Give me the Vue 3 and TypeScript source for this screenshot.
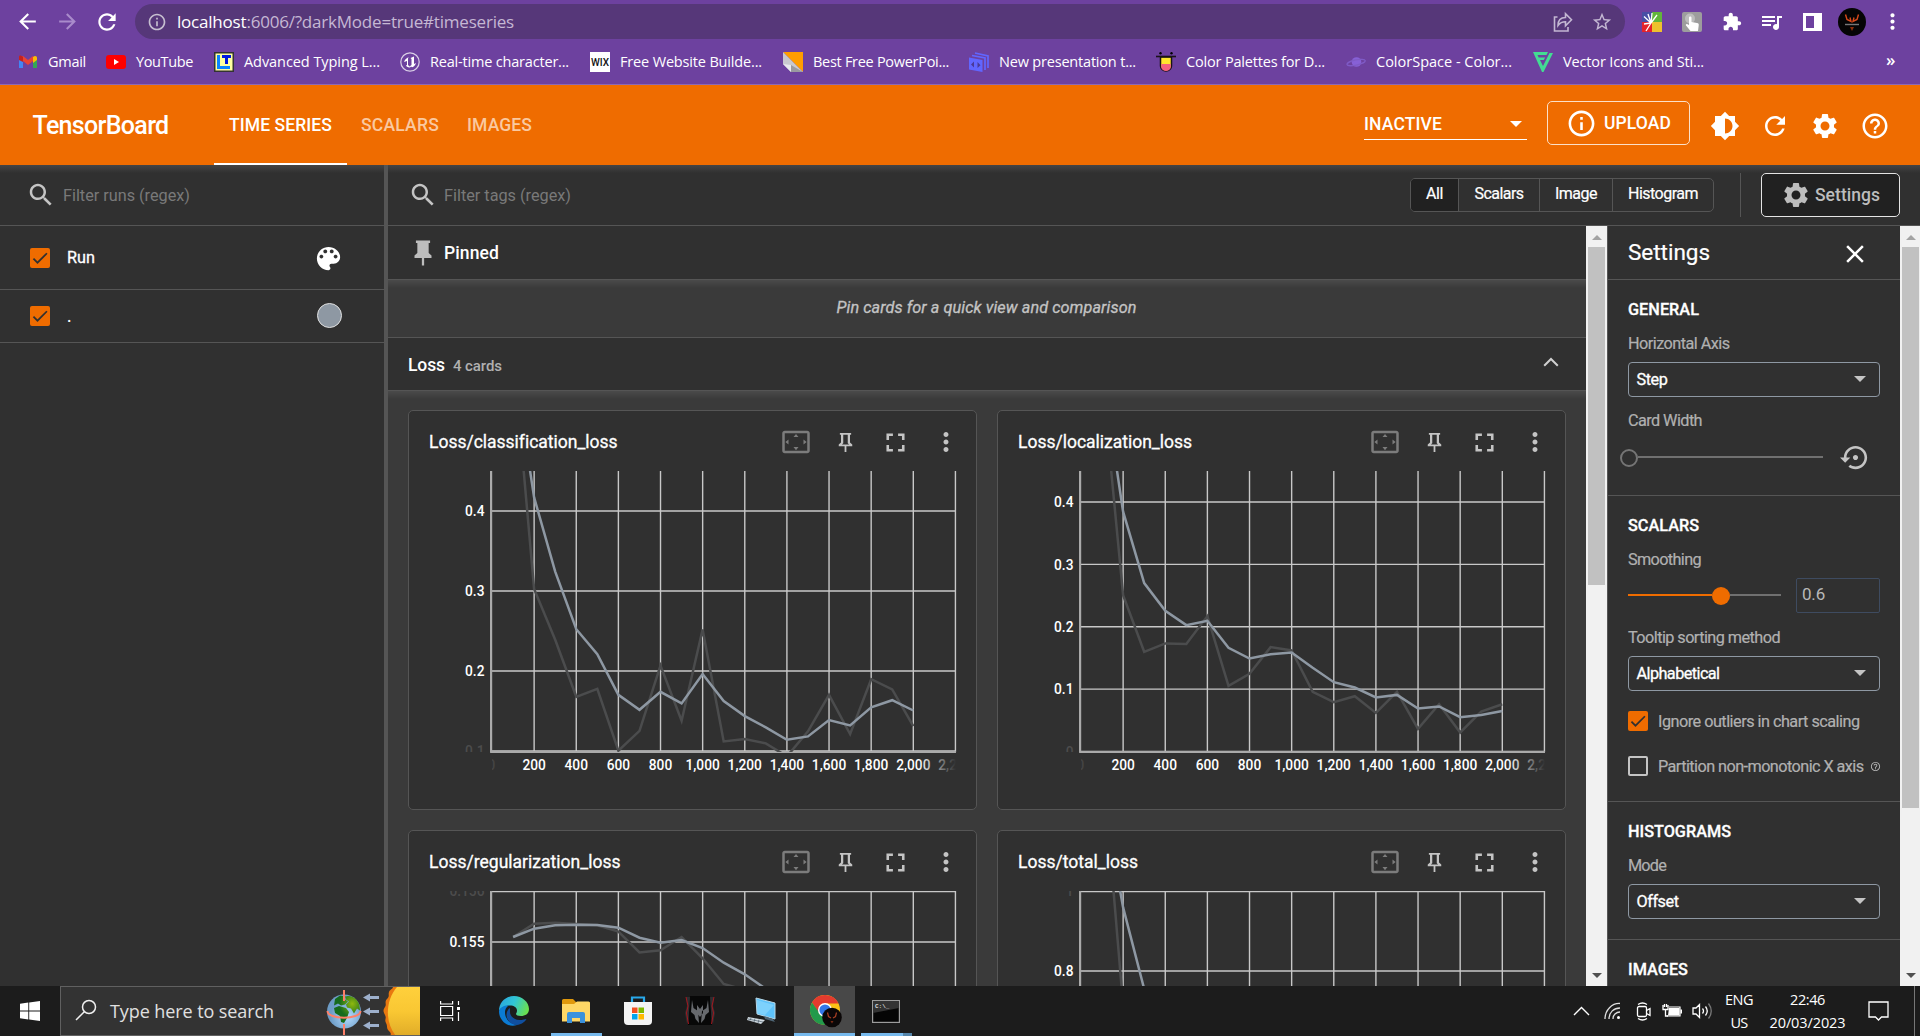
<script setup lang="ts">
import type { Directive } from 'vue'

// Spreads a label over the given width by adjusting its letter spacing.
const vFit: Directive<HTMLElement, number> = {
  mounted(el, { value }) {
    const count = (el.textContent ?? '').trim().length
    if (count < 2) return
    const range = document.createRange()
    range.selectNodeContents(el)
    const natural = range.getBoundingClientRect().width
    el.style.letterSpacing = `${((value - natural) / count).toFixed(3)}px`
  },
}

const icons = {
  search: 'M15.5 14h-.79l-.28-.27C15.41 12.59 16 11.11 16 9.5 16 5.91 13.09 3 9.5 3S3 5.91 3 9.5 5.91 16 9.5 16c1.61 0 3.09-.59 4.23-1.57l.27.28v.79l5 4.99L20.49 19l-4.99-5zm-6 0C7.01 14 5 11.99 5 9.5S7.01 5 9.5 5 14 7.01 14 9.5 11.99 14 9.5 14z',
  gear: 'M19.14 12.94c.04-.3.06-.61.06-.94 0-.32-.02-.64-.07-.94l2.03-1.58c.18-.14.23-.41.12-.61l-1.92-3.32c-.12-.22-.37-.29-.59-.22l-2.39.96c-.5-.38-1.03-.7-1.62-.94l-.36-2.54c-.04-.24-.24-.41-.48-.41h-3.84c-.24 0-.43.17-.47.41l-.36 2.54c-.59.24-1.13.57-1.62.94l-2.39-.96c-.22-.08-.47 0-.59.22L2.74 8.87c-.12.21-.08.47.12.61l2.03 1.58c-.05.3-.09.63-.09.94s.02.64.07.94l-2.03 1.58c-.18.14-.23.41-.12.61l1.92 3.32c.12.22.37.29.59.22l2.39-.96c.5.38 1.03.7 1.62.94l.36 2.54c.05.24.24.41.48.41h3.84c.24 0 .44-.17.47-.41l.36-2.54c.59-.24 1.13-.56 1.62-.94l2.39.96c.22.08.47 0 .59-.22l1.92-3.32c.12-.22.07-.47-.12-.61l-2.01-1.58zM12 15.6c-1.98 0-3.6-1.62-3.6-3.6s1.62-3.6 3.6-3.6 3.6 1.62 3.6 3.6-1.62 3.6-3.6 3.6z',
  help: 'M11 18h2v-2h-2v2zm1-16C6.48 2 2 6.48 2 12s4.48 10 10 10 10-4.48 10-10S17.52 2 12 2zm0 18c-4.41 0-8-3.59-8-8s3.59-8 8-8 8 3.59 8 8-3.59 8-8 8zm0-14c-2.21 0-4 1.79-4 4h2c0-1.1.9-2 2-2s2 .9 2 2c0 2-3 1.75-3 5h2c0-2.25 3-2.5 3-5 0-2.21-1.79-4-4-4z',
  info: 'M11 17h2v-6h-2v6zm1-15C6.48 2 2 6.48 2 12s4.48 10 10 10 10-4.48 10-10S17.52 2 12 2zm0 18c-4.41 0-8-3.59-8-8s3.59-8 8-8 8 3.59 8 8-3.59 8-8 8zM11 9h2V7h-2v2z',
  refresh: 'M17.65 6.35C16.2 4.9 14.21 4 12 4c-4.42 0-7.99 3.58-7.99 8s3.57 8 7.99 8c3.73 0 6.84-2.55 7.73-6h-2.08c-.82 2.33-3.04 4-5.65 4-3.31 0-6-2.69-6-6s2.69-6 6-6c1.66 0 3.14.69 4.22 1.78L13 11h7V4l-2.35 2.35z',
  brightness: 'M20 15.31L23.31 12 20 8.69V4h-4.69L12 .69 8.69 4H4v4.69L.69 12 4 15.31V20h4.69L12 23.31 15.31 20H20v-4.69zM12 18V6c3.31 0 6 2.69 6 6s-2.69 6-6 6z',
  palette: 'M12 3c-4.97 0-9 4.03-9 9s4.03 9 9 9c.83 0 1.5-.67 1.5-1.5 0-.39-.15-.74-.39-1.01-.23-.26-.38-.61-.38-.99 0-.83.67-1.5 1.5-1.5H16c2.76 0 5-2.24 5-5 0-4.42-4.03-8-9-8zm-5.5 9c-.83 0-1.5-.67-1.5-1.5S5.67 9 6.5 9 8 9.67 8 10.5 7.33 12 6.5 12zm3-4C8.67 8 8 7.33 8 6.5S8.67 5 9.5 5s1.5.67 1.5 1.5S10.33 8 9.5 8zm5 0c-.83 0-1.5-.67-1.5-1.5S13.67 5 14.5 5s1.5.67 1.5 1.5S15.33 8 14.5 8zm3 4c-.83 0-1.5-.67-1.5-1.5S16.67 9 17.5 9s1.5.67 1.5 1.5-.67 1.5-1.5 1.5z',
  pin: 'M16 12V4h1V2H7v2h1v8l-2 2v2h5.2v6h1.6v-6H18v-2l-2-2z',
  pinOutline: 'M16 12V4h1V2H7v2h1v8l-2 2v2h5.2v6h1.6v-6H18v-2l-2-2zM8.8 14l1.2-1.2V4h4v8.8l1.2 1.2z',
  fullscreen: 'M7 14H5v5h5v-2H7v-3zm-2-4h2V7h3V5H5v5zm12 7h-3v2h5v-5h-2v3zM14 5v2h3v3h2V5h-5z',
  more: 'M12 8c1.1 0 2-.9 2-2s-.9-2-2-2-2 .9-2 2 .9 2 2 2zm0 2c-1.1 0-2 .9-2 2s.9 2 2 2 2-.9 2-2-.9-2-2-2zm0 6c-1.1 0-2 .9-2 2s.9 2 2 2 2-.9 2-2-.9-2-2-2z',
  overscan: 'M12.01 5.5L10 8h4l-1.99-2.5zM18 10v4l2.5-1.99L18 10zM6 10l-2.5 2.01L6 14v-4zm8 6h-4l2.01 2.5L14 16zm7-13H3c-1.1 0-2 .9-2 2v14c0 1.1.9 2 2 2h18c1.1 0 2-.9 2-2V5c0-1.1-.9-2-2-2zm0 16.01H3V4.99h18v14.02z',
  restore: 'M14 12c0-1.1-.9-2-2-2s-2 .9-2 2 .9 2 2 2 2-.9 2-2zm-2-9c-4.97 0-9 4.03-9 9H0l4 4 4-4H5c0-3.87 3.13-7 7-7s7 3.13 7 7-3.13 7-7 7c-1.51 0-2.91-.49-4.06-1.3l-1.42 1.44C8.04 20.3 9.94 21 12 21c4.97 0 9-4.03 9-9s-4.03-9-9-9z',
  close: 'M19 6.41L17.59 5 12 10.59 6.41 5 5 6.41 10.59 12 5 17.59 6.41 19 12 13.41 17.59 19 19 17.59 13.41 12z',
  back: 'M20 11H7.83l5.59-5.59L12 4l-8 8 8 8 1.41-1.41L7.83 13H20v-2z',
  forward: 'M12 4l-1.41 1.41L16.17 11H4v2h12.17l-5.58 5.59L12 20l8-8z',
  star: 'M22 9.24l-7.19-.62L12 2 9.19 8.63 2 9.24l5.46 4.73L5.82 21 12 17.27 18.18 21l-1.63-7.03L22 9.24zM12 15.4l-3.76 2.27 1-4.28-3.32-2.88 4.38-.38L12 6.1l1.71 4.04 4.38.38-3.32 2.88 1 4.28L12 15.4z',
  puzzle: 'M20.5 11H19V7c0-1.1-.9-2-2-2h-4V3.5C13 2.12 11.88 1 10.5 1S8 2.12 8 3.500V5H4c-1.1 0-1.990.9-1.990 2v3.8H3.500c1.490 0 2.700 1.210 2.700 2.700s-1.210 2.700-2.700 2.700H2V20c0 1.1.9 2 2 2h3.800v-1.500c0-1.490 1.210-2.700 2.700-2.700 1.490 0 2.700 1.210 2.700 2.700V22H17c1.1 0 2-.9 2-2v-4h1.500c1.380 0 2.500-1.120 2.500-2.500S21.880 11 20.500 11z',
  queue: 'M22 6h-5v8.180c-.31-.11-.65-.18-1-.18-1.660 0-3 1.340-3 3s1.340 3 3 3 3-1.340 3-3V8h3V6zM15 6H2v2h13V6zm0 4H2v2h13v-2zM2 16h9v-2H2v2z',
}

interface Bookmark { id: string; label: string; slot: number; width: number }
const bookmarks: Bookmark[] = [
  { id: 'gmail', label: 'Gmail', slot: 88, width: 38 },
  { id: 'youtube', label: 'YouTube', slot: 108, width: 57 },
  { id: 'typing', label: 'Advanced Typing L...', slot: 186, width: 136 },
  { id: 'unreal', label: 'Real-time character...', slot: 190, width: 139 },
  { id: 'wix', label: 'Free Website Builde...', slot: 193, width: 142 },
  { id: 'slides', label: 'Best Free PowerPoi...', slot: 186, width: 136 },
  { id: 'deck', label: 'New presentation t...', slot: 187, width: 137 },
  { id: 'palettes', label: 'Color Palettes for D...', slot: 190, width: 139 },
  { id: 'space', label: 'ColorSpace - Color...', slot: 187, width: 136 },
  { id: 'vector', label: 'Vector Icons and Sti...', slot: 190, width: 141 },
]

const segments = [
  { label: 'All', slot: 47, width: 17, active: true },
  { label: 'Scalars', slot: 81, width: 49, active: false },
  { label: 'Image', slot: 73, width: 42, active: false },
  { label: 'Histogram', slot: 101, width: 70, active: false },
]

interface Chart {
  title: string
  titleWidth: number
  max: number
  min: number
  ticks: { value: number; label: string; faded?: boolean }[]
  smooth: number[]
  raw: number[]
}
const charts: Chart[] = [
  {
    title: 'Loss/classification_loss', titleWidth: 188, max: 0.45, min: 0.0988,
    ticks: [{ value: 0.4, label: '0.4' }, { value: 0.3, label: '0.3' }, { value: 0.2, label: '0.2' }, { value: 0.1, label: '0.1', faded: true }],
    smooth: [0.59, 0.417, 0.3243, 0.2523, 0.2211, 0.1703, 0.1516, 0.174, 0.1595, 0.1961, 0.1624, 0.1437, 0.1295, 0.1141, 0.1183, 0.1387, 0.132, 0.1545, 0.1636, 0.1507],
    raw: [0.6, 0.3026, 0.239, 0.1678, 0.1778, 0.1004, 0.1253, 0.2069, 0.1378, 0.2519, 0.112, 0.115, 0.1095, 0.0933, 0.1245, 0.1703, 0.1212, 0.1898, 0.177, 0.1312],
  },
  {
    title: 'Loss/localization_loss', titleWidth: 174, max: 0.4497, min: -0.0007,
    ticks: [{ value: 0.4, label: '0.4' }, { value: 0.3, label: '0.3' }, { value: 0.2, label: '0.2' }, { value: 0.1, label: '0.1' }, { value: 0, label: '0', faded: true }],
    smooth: [0.61, 0.3845, 0.2701, 0.2257, 0.2027, 0.2096, 0.1663, 0.1492, 0.1561, 0.1588, 0.1342, 0.1112, 0.1027, 0.0866, 0.0909, 0.069, 0.0722, 0.0551, 0.0588, 0.0652],
    raw: [0.602, 0.2508, 0.1599, 0.1733, 0.1722, 0.2171, 0.1053, 0.1246, 0.1674, 0.162, 0.0957, 0.0791, 0.0888, 0.062, 0.0957, 0.0364, 0.0759, 0.0305, 0.0642, 0.0759],
  },
  {
    title: 'Loss/regularization_loss', titleWidth: 191.5, max: 0.156, min: 0.15049,
    ticks: [{ value: 0.156, label: '0.156', faded: true }, { value: 0.155, label: '0.155' }],
    smooth: [0.155098, 0.155261, 0.155327, 0.15534, 0.155333, 0.155281, 0.155085, 0.154987, 0.155039, 0.154882, 0.154595, 0.154366, 0.15408],
    raw: [0.155098, 0.155359, 0.155379, 0.155353, 0.155327, 0.155203, 0.154797, 0.154837, 0.155098, 0.15468, 0.154176, 0.15406, 0.1537],
  },
  {
    title: 'Loss/total_loss', titleWidth: 120, max: 1, min: 0.2975,
    ticks: [{ value: 1, label: '1', faded: true }, { value: 0.8, label: '0.8' }],
    smooth: [1.25, 0.959, 0.755, 0.6],
    raw: [1.34, 0.715, 0.5],
  },
]

const plot = { left: 64, step: 42.13, height: 281 }
const xAt = (i: number) => plot.left + plot.step * i
const yAt = (c: Chart, v: number) => ((c.max - v) / (c.max - c.min)) * plot.height
const line = (c: Chart, values: number[]) =>
  values.map((v, i) => `${xAt((i + 1) / 2).toFixed(1)},${yAt(c, v).toFixed(1)}`).join(' ')
const xLabels = ['200', '400', '600', '800', '1,000', '1,200', '1,400', '1,600', '1,800', '2,000']
</script>

<template>
  <div class="screen">
    <!-- Browser toolbar -->
    <div class="browser">
      <div class="nav">
        <span class="cell"><svg width="25" height="25" viewBox="0 0 24 24" fill="#fff"><path :d="icons.back" /></svg></span>
        <span class="cell"><svg width="25" height="25" viewBox="0 0 24 24" fill="#a98bcb"><path :d="icons.forward" /></svg></span>
        <span class="cell"><svg width="26" height="26" viewBox="0 0 24 24" fill="#fff"><path :d="icons.refresh" /></svg></span>
        <div class="address">
          <svg width="20" height="20" viewBox="0 0 24 24" fill="#c6bfd0"><path :d="icons.info" /></svg>
          <span v-fit="337" class="url"><b>localhost</b>:6006/?darkMode=true#timeseries</span>
          <svg class="share" width="22" height="22" viewBox="0 0 22 22" fill="none" stroke="#c3b7d2" stroke-width="1.6"><path d="M5.500 6H2.500v14h13.500v-4" /><path d="M6 14.500c0-5 2.500-8 7.500-8V2.800l6 6-6 6v-4c-3.500 0-5.500 1-7.500 3.700z" /></svg>
          <svg class="fav" width="22" height="22" viewBox="0 0 24 24" fill="#c3b7d2"><path :d="icons.star" /></svg>
        </div>
        <span class="cell first">
          <svg width="20" height="20" viewBox="0 0 20 20"><rect width="10" height="10" fill="#484fa5" /><rect x="10" width="10" height="10" fill="#62b53b" /><rect y="10" width="10" height="10" fill="#e5232c" /><rect x="10" y="10" width="10" height="10" fill="#eec12e" /><path d="M9 11L2 4.500m7 6.500L6 2m3 9l1-10m-1 10l6-8m-6 8L2 12m7-1l-5 8" stroke="#fff" stroke-width="1.300" /></svg>
        </span>
        <span class="cell">
          <svg width="20" height="20" viewBox="0 0 20 20"><rect width="20" height="20" rx="2" fill="#9d9d9d" /><circle cx="8" cy="6.500" r="5" fill="#bdbdbd" /><path d="M7 5.500c0-1.500 2.500-1.500 2.500 0V10l5.500 1c1.500.4 2 1 1.700 2.500L16 19H8.500L4 13.500c-.6-1 .5-2 1.500-1.200L7 13z" fill="#fff" /></svg>
        </span>
        <span class="cell"><svg width="20" height="20" viewBox="0 0 24 24" fill="#fff"><path :d="icons.puzzle" /></svg></span>
        <span class="cell"><svg width="24" height="24" viewBox="0 0 24 24" fill="#fff"><path :d="icons.queue" /></svg></span>
        <span class="cell"><svg width="19" height="18" viewBox="0 0 19 18"><path fill="#fff" fill-rule="evenodd" d="M0 0h19v18H0zM3 3v12h8V3z" /></svg></span>
        <span class="cell">
          <svg width="28" height="28" viewBox="0 0 28 28"><circle cx="14" cy="14" r="14" fill="#050505" /><path d="M7.500 6.500l1.500 5 4 2-1-4m8.500-3l-1.500 5-4 2 1-4" stroke="#d9491a" stroke-width="1.400" fill="none" /><path d="M7 16.500h14" stroke="#777" stroke-width="1.400" /><path d="M12 19h4l-2 4z" fill="#8c2d0b" /></svg>
        </span>
        <span class="cell"><svg width="25" height="25" viewBox="0 0 24 24" fill="#fff"><path :d="icons.more" /></svg></span>
      </div>
      <div class="bookmarks">
        <div v-for="b in bookmarks" :key="b.id" class="bookmark" :style="{ width: b.slot + 'px' }">
          <svg width="20" height="20" viewBox="0 0 20 20">
            <template v-if="b.id === 'gmail'">
              <path d="M1 6v10h4V8z" fill="#4285f4" /><path d="M19 6v10h-4V8z" fill="#34a853" /><path d="M1 4.500L5 4l5 4 5-4v5l-5 4-5-4-4-2z" fill="#ea4335" /><path d="M15 5c2-2 4-1 4 1v2l-4 3z" fill="#fbbc04" /><path d="M1 5c0-2 2-2 4 0v5L1 8z" fill="#c5221f" />
            </template>
            <template v-else-if="b.id === 'youtube'">
              <rect y="3" width="20" height="14" rx="3" fill="#f00" /><path d="M8 7v6l5-3z" fill="#fff" />
            </template>
            <template v-else-if="b.id === 'typing'">
              <rect x=".75" y=".75" width="18.500" height="18.500" fill="#ffffa0" stroke="#333" stroke-width="1.500" /><path d="M3 3h3v11h10v3H3z" fill="#0a84ff" /><path d="M8 3h9v3h-3v6h-3V6H8z" fill="#0018e0" />
            </template>
            <template v-else-if="b.id === 'unreal'">
              <circle cx="10" cy="10" r="9.200" fill="none" stroke="#d9cfe6" stroke-width="1.200" /><path d="M4 10c1-3 3-4 5-5-1 1-1 1-1 3v5l1.500 1.500L11.500 13V7l-1-1 3.500-1.500V12l2-1c-1 3-3 4-4 4.200l-1-.7-1 1c-2.500 0-4-1.500-4-2l1-.5V9z" fill="#fff" />
            </template>
            <template v-else-if="b.id === 'wix'">
              <rect width="20" height="20" fill="#fff" /><text x="1" y="13.500" font-family="Roboto, sans-serif" font-size="10" font-weight="500" textLength="18" fill="#111">WIX</text>
            </template>
            <template v-else-if="b.id === 'slides'">
              <path d="M0 0h20v20z" fill="#ff9d00" /><path d="M0 0l20 20H8L0 12z" fill="#c9c9cf" /><path d="M0 12l8 1v7z" fill="#e9e9ee" /><path d="M8 13l12 7H8z" fill="#9a9aa0" />
            </template>
            <template v-else-if="b.id === 'deck'">
              <path d="M6 1l13 3v12M3 3.500l13 2.500v12" fill="none" stroke="#6166ff" stroke-width="1.700" /><path d="M0 5.500L13.500 8v12L0 17.500z" fill="#6166ff" /><path d="M5 9.500v6l-3-3zM8.500 10v6l3-2.700z" fill="#4a3a98" />
            </template>
            <template v-else-if="b.id === 'palettes'">
              <path d="M4.500 5v9a5.500 5 0 0 0 11 0V5z" fill="#ffe62e" stroke="#1a1218" stroke-width="1.500" /><path d="M5.200 12h9.600v3a4.800 4 0 0 1-9.600 0z" fill="#f4607f" /><path d="M0 4.500h20" stroke="#1a1218" stroke-width="1.600" /><circle cx="4.500" cy="1.200" r="1.200" /><circle cx="15.500" cy="1.200" r="1.200" />
            </template>
            <template v-else-if="b.id === 'space'">
              <circle cx="10.500" cy="10" r="4.800" fill="#8760d6" /><ellipse cx="10" cy="10.500" rx="9.300" ry="2.600" fill="none" stroke="#7f5bc6" stroke-width="1.300" transform="rotate(-12 10 10)" />
            </template>
            <template v-else>
              <path d="M0 0h15l-1.500 3H4.500l1.200 2.500h6.500L10.700 8H7l3 6 6.500-13H20L10.500 20H9z" fill="#43dc93" />
            </template>
          </svg>
          <span v-fit="b.width">{{ b.label }}</span>
        </div>
        <span class="overflow">»</span>
      </div>
    </div>

    <!-- Application header -->
    <header class="header">
      <span v-fit="136" class="brand">TensorBoard</span>
      <nav class="tabs">
        <span class="tab active"><span v-fit="103">TIME SERIES</span></span>
        <span class="tab scalars"><span v-fit="78">SCALARS</span></span>
        <span class="tab"><span v-fit="65">IMAGES</span></span>
      </nav>
      <div class="inactive"><span v-fit="78">INACTIVE</span><i class="caret white"></i></div>
      <button class="upload">
        <svg width="31" height="31" viewBox="0 0 24 24" fill="#fff"><path :d="icons.info" /></svg>
        <span v-fit="67">UPLOAD</span>
      </button>
      <div class="actions">
        <svg viewBox="0 0 24 24"><path :d="icons.brightness" /></svg>
        <svg viewBox="0 0 24 24"><path :d="icons.refresh" /></svg>
        <svg viewBox="0 0 24 24"><path :d="icons.gear" /></svg>
        <svg viewBox="0 0 24 24"><path :d="icons.help" /></svg>
      </div>
    </header>

    <div class="body">
      <aside class="runs">
        <div class="filter">
          <svg width="30" height="30" viewBox="0 0 24 24"><path :d="icons.search" /></svg>
          <span v-fit="127">Filter runs (regex)</span>
        </div>
        <div class="run head">
          <span class="check on"><svg viewBox="0 0 24 24"><path d="M4.100 12.700L9 17.600 20.300 6.300" /></svg></span>
          <span v-fit="28" class="name">Run</span>
          <svg class="palette" width="31" height="31" viewBox="0 0 24 24" fill="#fff"><path :d="icons.palette" /></svg>
        </div>
        <div class="run">
          <span class="check on"><svg viewBox="0 0 24 24"><path d="M4.100 12.700L9 17.600 20.300 6.300" /></svg></span>
          <span class="name">.</span>
          <i class="swatch"></i>
        </div>
      </aside>

      <main class="content">
        <div class="toolbar">
          <div class="filter tags">
            <svg width="30" height="30" viewBox="0 0 24 24"><path :d="icons.search" /></svg>
            <span v-fit="127">Filter tags (regex)</span>
          </div>
          <div class="segments">
            <span v-for="s in segments" :key="s.label" class="segment" :class="{ active: s.active }" :style="{ width: s.slot + 'px' }"><span v-fit="s.width">{{ s.label }}</span></span>
          </div>
          <i class="separator"></i>
          <button class="settings-btn">
            <svg width="30" height="30" viewBox="0 0 24 24"><path :d="icons.gear" /></svg>
            <span v-fit="65">Settings</span>
          </button>
        </div>

        <div class="panes">
          <section class="cards-pane">
            <div class="pinned">
              <svg width="34" height="30" viewBox="0 0 24 24" preserveAspectRatio="none" fill="#bdbdbd"><path :d="icons.pin" /></svg>
              <span v-fit="55">Pinned</span>
            </div>
            <div class="hint"><span v-fit="300">Pin cards for a quick view and comparison</span></div>
            <div class="group">
              <span v-fit="37" class="group-name">Loss</span>
              <span v-fit="49" class="group-count">4 cards</span>
              <svg width="16" height="10" viewBox="0 0 16 10"><path d="M1.200 8.700L8 2l6.800 6.700" fill="none" stroke="#d0d0d0" stroke-width="2" /></svg>
            </div>
            <div class="grid">
              <article v-for="(c, n) in charts" :key="c.title" class="card">
                <div class="card-head">
                  <span v-fit="c.titleWidth" class="card-title">{{ c.title }}</span>
                  <span class="tool dim"><svg width="30" height="30" viewBox="0 0 24 24"><path :d="icons.overscan" /></svg></span>
                  <span class="tool"><svg width="27" height="23" viewBox="0 0 24 24" preserveAspectRatio="none"><path fill-rule="evenodd" :d="icons.pinOutline" /></svg></span>
                  <span class="tool"><svg width="31" height="31" viewBox="0 0 24 24"><path :d="icons.fullscreen" /></svg></span>
                  <span class="tool"><svg width="30" height="30" viewBox="0 0 24 24"><path :d="icons.more" /></svg></span>
                </div>
                <svg class="chart" width="529" height="310" viewBox="0 0 529 310">
                  <defs>
                    <clipPath :id="'plot' + n"><rect x="63" y="0" width="465" :height="plot.height" /></clipPath>
                    <clipPath :id="'axis' + n"><rect x="0" y="0" width="528" :height="plot.height" /></clipPath>
                    <clipPath :id="'zero' + n"><rect x="64" y="284" width="464" height="24" /></clipPath>
                    <linearGradient :id="'fade' + n" gradientUnits="userSpaceOnUse" x1="490" x2="528" y1="0" y2="0"><stop offset="0" stop-color="#fff" /><stop offset="1" stop-color="#303030" /></linearGradient>
                  </defs>
                  <g class="gridlines">
                    <line v-for="i in 11" :key="i" :x1="xAt(i)" :x2="xAt(i)" y1="0" :y2="plot.height" />
                    <line v-for="t in c.ticks" :key="t.label" x1="64" x2="528" :y1="Math.max(0.6, yAt(c, t.value))" :y2="Math.max(0.6, yAt(c, t.value))" />
                  </g>
                  <path d="M63.100 0V281.500M62.200 281H528" fill="none" stroke="#aaa" stroke-width="2.200" />
                  <g :clip-path="`url(#plot${n})`" fill="none" stroke-width="2.500">
                    <polyline :points="line(c, c.raw)" stroke="#4b4c4d" />
                    <polyline :points="line(c, c.smooth)" stroke="#8e98a3" />
                  </g>
                  <g class="labels" :clip-path="`url(#axis${n})`">
                    <text v-for="t in c.ticks" :key="t.label" x="56.500" :y="yAt(c, t.value) + 5.3" text-anchor="end" :fill="t.faded ? '#4c4c4c' : '#fff'">{{ t.label }}</text>
                  </g>
                  <g v-if="n < 2" class="labels" :clip-path="`url(#zero${n})`">
                    <text x="63.500" y="299.400" text-anchor="middle" fill="#444">0</text>
                    <text v-for="(l, i) in xLabels" :key="l" :x="xAt(i + 1)" y="299.400" text-anchor="middle" :fill="i === 9 ? `url(#fade${n})` : '#fff'">{{ l }}</text>
                    <text :x="xAt(11)" y="299.400" text-anchor="middle" :fill="`url(#fade${n})`">2,200</text>
                  </g>
                </svg>
              </article>
            </div>
          </section>
          <div class="scrollbar"><i class="up"></i><i class="thumb short"></i><i class="down"></i></div>

          <aside class="settings">
            <div class="settings-title">
              <span v-fit="82">Settings</span>
              <svg width="30" height="30" viewBox="0 0 24 24" fill="#fff"><path :d="icons.close" /></svg>
            </div>
            <div class="section general">
              <h3 v-fit="71">GENERAL</h3>
              <label v-fit="101.5">Horizontal Axis</label>
              <div class="select"><span v-fit="31">Step</span><i class="caret"></i></div>
              <label v-fit="74" class="after-select">Card Width</label>
              <div class="slider-row">
                <i class="knob hollow"></i><i class="track"></i>
                <svg width="31" height="31" viewBox="0 0 24 24" fill="#c4c4c4"><path :d="icons.restore" /></svg>
              </div>
            </div>
            <div class="section scalar">
              <h3 v-fit="71">SCALARS</h3>
              <label v-fit="73">Smoothing</label>
              <div class="smoothing">
                <i class="fill"></i><i class="knob"></i><i class="rest"></i>
                <div class="number"><span v-fit="23">0.6</span></div>
              </div>
              <label v-fit="152" class="sorting">Tooltip sorting method</label>
              <div class="select"><span v-fit="83">Alphabetical</span><i class="caret"></i></div>
              <div class="option">
                <span class="check on"><svg viewBox="0 0 24 24"><path d="M4.100 12.700L9 17.600 20.300 6.300" /></svg></span>
                <span v-fit="201.5">Ignore outliers in chart scaling</span>
              </div>
              <div class="option second">
                <span class="check"></span>
                <span v-fit="205.5">Partition non-monotonic X axis</span>
                <svg width="11" height="11" viewBox="0 0 24 24" fill="#b5b5b5"><path :d="icons.help" /></svg>
              </div>
            </div>
            <div class="section histogram">
              <h3 v-fit="103">HISTOGRAMS</h3>
              <label v-fit="38">Mode</label>
              <div class="select"><span v-fit="42">Offset</span><i class="caret"></i></div>
            </div>
            <div class="section images"><h3 v-fit="60">IMAGES</h3></div>
          </aside>
          <div class="scrollbar right"><i class="up"></i><i class="thumb long"></i><i class="down"></i></div>
        </div>
      </main>
    </div>

    <!-- Windows taskbar -->
    <footer class="taskbar">
      <span class="start"><svg width="20" height="20" viewBox="0 0 20 20" fill="#fff"><path d="M0 2.800L8.300 1.600v8H0zM9.200 1.500L20 0v9.600H9.200zM0 10.400h8.300v8L0 17.200zM9.200 10.400H20V20L9.200 18.500z" /></svg></span>
      <div class="search">
        <svg class="lens" width="22" height="22" viewBox="0 0 22 22" fill="none" stroke="#f0f0f0" stroke-width="1.500"><circle cx="14" cy="8" r="6.500" /><path d="M9.300 12.700L1 21" /></svg>
        <span v-fit="164">Type here to search</span>
        <svg class="earth" width="94" height="49" viewBox="0 0 94 49">
          <defs>
            <linearGradient id="sun" x1="0" x2="0" y1="0" y2="1"><stop offset="0" stop-color="#ffd03c" /><stop offset=".5" stop-color="#f9c733" /><stop offset="1" stop-color="#e0ac28" /></linearGradient>
            <radialGradient id="sea" cx=".6" cy=".65"><stop offset="0" stop-color="#b4dcff" /><stop offset="1" stop-color="#6d9cc6" /></radialGradient>
            <radialGradient id="land" cx=".7" cy=".3"><stop offset="0" stop-color="#8fb80e" /><stop offset="1" stop-color="#166b1c" /></radialGradient>
          </defs>
          <circle cx="18" cy="24.500" r="17" fill="url(#sea)" />
          <path d="M9 12l5-3.500 6 1-1 3 3 2-3 3-4 1-3-2-4 2zM20 9.500c6-2 12 3 13.500 9l.5 5-3-2-3 5-3-5-4-1-1-3 3-3-3-2zM8 21l5-2 7 2 3 4-2 6-3 5-3-1-1-6-5-3z" fill="url(#land)" />
          <path d="M1.500 24c0 9 33 9 33 0M18 3v11M18 37v11" fill="none" stroke="#ff8068" stroke-width="2" />
          <path d="M37 10.500l7-4v2.500h9v3h-9v2.500zM37 24.500l7-4V23h9v3h-9v2.500zM37 38.500l7-4V37h9v3h-9v2.500z" fill="#9db0cc" />
          <path d="M67 0c-1 3-3 2-4 5s1 4-2 7 0 5-2 8-2 4 0 8-1 4 1 8 0 5 3 8 1 3 2 5h29V0z" fill="#e8780f" />
          <path d="M71 0C59 14 59 36 70 49h24V0z" fill="url(#sun)" />
        </svg>
      </div>
      <span class="task view">
        <svg width="20" height="20" viewBox="0 0 20 20" fill="none" stroke="#fff" stroke-width="1.200"><path d="M.6 0v3h12V0M.6 20v-3h12v3M.6 5.500h12v9H.6zM18.500 0v4M18.500 11v9" /><path d="M17 6h3v3h-3z" fill="#fff" stroke="none" /></svg>
      </span>
      <span class="task edge">
        <svg width="30" height="30" viewBox="0 0 30 30">
          <defs><linearGradient id="edgeTop" x1="0" x2="1" y1=".2" y2=".5"><stop offset="0" stop-color="#2aa5e0" /><stop offset=".5" stop-color="#31c5d4" /><stop offset="1" stop-color="#6adf50" /></linearGradient></defs>
          <path d="M0 15C0 6 7 0 15 0s15 6 15 13c0 5-4 7-8 7-3 0-5-1-5-2s1-1 1-3.500c0-3-3-5-7-5C6 9.500 1 12 0 15z" fill="url(#edgeTop)" />
          <path d="M0 15c1-4 6-6 10-5.500-3 1.500-4 4-4 6.500 0 7 5 12 12 13-9 3-18-4-18-14z" fill="#0b7bd4" />
          <path d="M11 12c-2 1-3.500 4-3.500 6.500C7.500 25 13 29 18 29c4-.5 8-3 9.500-6-1-.5-3 1-7 1C15 24 11 20 11 16z" fill="#104f9f" />
        </svg>
      </span>
      <span class="task underlined folder">
        <svg width="28" height="24" viewBox="0 0 28 24"><path d="M0 1.500Q0 0 1.500 0H11l3 3h12.500Q28 3 28 5v5H0z" fill="#e0980c" /><path d="M0 5h12l3-2.500h11.500Q28 2.500 28 4v18.500H0z" fill="#ffd766" /><path d="M5 24v-9q0-2 2-2h14q2 0 2 2v9h-5v-5h-8v5z" fill="#3b92dc" /></svg>
      </span>
      <span class="task store">
        <svg width="30" height="30" viewBox="0 0 30 30"><path d="M9 7V1.500h12V7" fill="none" stroke="#28a8ea" stroke-width="2.200" /><path d="M1 6h28v19q0 4-4 4H5q-4 0-4-4z" fill="#f4f4f4" /><path d="M9 11.500h5.500V17H9z" fill="#f25022" /><path d="M15.500 11.500H21V17h-5.500z" fill="#7fba00" /><path d="M9 18h5.500v5.500H9z" fill="#00a4ef" /><path d="M15.500 18H21v5.500h-5.500z" fill="#ffb900" /></svg>
      </span>
      <span class="task predator">
        <svg width="30" height="30" viewBox="0 0 30 30"><path d="M5 0h20l2 29H3z" fill="#080808" /><path d="M1 1h4L3.500 24 2 28 0 17l2-7zM29 1h-4l1.500 23 1.500 4 2-11-2-7z" fill="#2c2e31" /><path d="M1 1l2 9-1.500 7L3.500 28M29 1l-2 9 1.500 7-2 11" fill="none" stroke="#a5151d" stroke-width="1" /><path d="M7 4l1.500 8L13 15l1 12-3.500-4-1-4L6 16zM23 4l-1.500 8L17 15l-1 12 3.500-4 1-4L24 16zM12 9l3 4 3-4v8l-3 4-3-4z" fill="#67696d" /></svg>
      </span>
      <span class="task pc">
        <svg width="30" height="30" viewBox="0 0 30 30"><path d="M9 2l19 5v16L10 18z" fill="#5ec3fb" stroke="#b8d8e8" stroke-width="1" /><path d="M10 4l17 5-9 10-8-2z" fill="#93dafe" opacity=".6" /><path d="M17 20l9 3 2 3-10-3z" fill="#4e6575" /><path d="M1 21l17 3-4 4L0 24z" fill="#d3dce2" /><path d="M4 22l-1 2.500M8 22.500L7 26M12 23.500L11 27M1 23l15 3" stroke="#4a5b68" stroke-width=".7" /></svg>
      </span>
      <span class="task chrome">
        <svg width="34" height="34" viewBox="0 0 34 34"><circle cx="16" cy="16" r="15" fill="#fbc116" /><path d="M3 8.500A15 15 0 0 1 29.500 9.500H16l-6 10z" fill="#e33b2e" /><path d="M3 8.500A15 15 0 0 0 16 31l6.500-11-12-1z" fill="#229a4b" /><circle cx="16" cy="16" r="7" fill="#fff" /><circle cx="16" cy="16" r="5.600" fill="#3378e8" /><circle cx="23" cy="23.500" r="9.800" fill="#0b0707" /><path d="M18.500 18.500l1 4 2.500 1.500m5.500-5.500l-1 4-2.500 1.500" fill="none" stroke="#a83f22" stroke-width="1.200" /><path d="M21.500 27h3L23 29.500z" fill="#7c2a12" /></svg>
      </span>
      <span class="task underlined cmd">
        <svg width="28" height="23" viewBox="0 0 28 23"><rect x=".6" y=".6" width="26.800" height="21.800" fill="#050505" stroke="#9c9c9c" stroke-width="1.200" /><path d="M1 1h26v7L1 13z" fill="#333" /><text x="3" y="7.500" font-family="Liberation Mono, monospace" font-size="6" font-weight="700" fill="#ddd">C:\_</text></svg>
      </span>
      <div class="tray">
        <span class="tray-icon"><svg width="17" height="10" viewBox="0 0 17 10"><path d="M1 9l7.500-7.500L16 9" fill="none" stroke="#fff" stroke-width="1.400" /></svg></span>
        <span class="tray-icon"><svg width="17" height="18" viewBox="0 0 17 18" fill="none" stroke="#ddd" stroke-width="1.300"><path d="M1 17C1 8 8 1 16 1.500M5 17C5 10 10 6 16 6M9 17c0-4 3-7 7-7" /><circle cx="14.500" cy="15.500" r="1.500" fill="#fff" stroke="none" /></svg></span>
        <span class="tray-icon"><svg width="16" height="19" viewBox="0 0 16 19" fill="none" stroke="#fff" stroke-width="1.300"><rect x="1.500" y="4.500" width="9" height="10" rx="1.500" /><path d="M10.500 8.500l3.500-2v7l-3.500-2M2 2.500Q6.500-.5 11 2.500M2 16.500q4.500 3 9 0" /></svg></span>
        <span class="tray-icon"><svg width="21" height="14" viewBox="0 0 21 14"><path d="M7 3h11v9H5" fill="none" stroke="#fff" stroke-width="1.200" /><path d="M7 4h10.500v7.500H6zM18.500 5.500H20v4h-1.500z" fill="#fff" /><path d="M1 1v4.500h5V1M2.500 0v3M4.500 0v3M3.500 5v7H6" fill="none" stroke="#fff" stroke-width="1.300" /></svg></span>
        <span class="tray-icon last"><svg width="21" height="18" viewBox="0 0 21 18" fill="none" stroke="#fff" stroke-width="1.300"><path d="M1 6h3l3.500-3.500v13L4 12H1zM10.500 6.500q2 2.500 0 5M13.500 4.500q3.500 4.500 0 9" /><path d="M16.500 1.500q5.500 7.500 0 15" stroke="#777" /></svg></span>
        <div class="stack lang"><span v-fit="28">ENG</span><span v-fit="17">US</span></div>
        <div class="stack clock"><span v-fit="35">22:46</span><span v-fit="76">20/03/2023</span></div>
        <svg class="notice" width="21" height="21" viewBox="0 0 21 21"><path d="M1 1h19v15h-6.500l-3 3-3-3H1z" fill="none" stroke="#fff" stroke-width="1.300" /></svg>
        <i class="peek"></i>
      </div>
    </footer>
  </div>
</template>

<style>
body {
  overflow: hidden;
  background: #303030;
}
</style>

<style scoped>
* {
  box-sizing: border-box;
}
.screen {
  width: 1920px;
  height: 1036px;
  overflow: hidden;
  display: flex;
  flex-direction: column;
  font-family: Roboto, sans-serif;
  color: #fff;
  white-space: nowrap;
}
svg {
  display: block;
  flex: none;
}
button {
  font: inherit;
  color: inherit;
  background: none;
  padding: 0;
}
i {
  display: block;
  flex: none;
}

/* Browser */
.browser {
  height: 85px;
  flex: none;
  background: #6d419f;
  border-bottom: 1px solid #8b68b5;
  font-family: "Open Sans", "Noto Sans", sans-serif;
}
.nav {
  height: 43px;
  display: flex;
  align-items: center;
  padding-left: 7px;
}
.cell {
  width: 40px;
  display: flex;
  justify-content: center;
  flex: none;
}
.cell.first {
  margin-left: 7px;
}
.address {
  width: 1490px;
  height: 35px;
  margin-left: 8px;
  border-radius: 18px;
  background: #563779;
  display: flex;
  align-items: center;
  padding-left: 12px;
  flex: none;
}
.url {
  width: 1368px;
  margin-left: 10px;
  margin-right: 1px;
  font-size: 17px;
  color: #c5b8d4;
}
.url b {
  font-weight: 400;
  color: #fff;
}
.share {
  margin-left: 6px;
}
.fav {
  margin-left: 17px;
}
.bookmarks {
  height: 37px;
  display: flex;
  align-items: center;
  padding-left: 18px;
  font-size: 14.5px;
}
.bookmark {
  display: flex;
  align-items: center;
  gap: 10px;
  flex: none;
}
.bookmark span {
  padding-bottom: 1px;
}
.overflow {
  margin-left: 163px;
  font-size: 17px;
  font-weight: 600;
  line-height: 20px;
  padding-bottom: 3px;
}

/* Header */
.header {
  height: 80px;
  flex: none;
  background: #ef6c00;
  display: flex;
  align-items: center;
  padding-left: 32.5px;
}
.brand {
  width: 181.5px;
  font-size: 25px;
  font-weight: 500;
}
.tabs {
  display: flex;
  align-self: stretch;
  width: 1150px;
  font-size: 17.5px;
  font-weight: 500;
}
.tab {
  display: flex;
  align-items: center;
  height: 80px;
  padding: 2px 14px 0;
  color: #fac9a0;
  border-bottom: 2px solid transparent;
}
.tab.active {
  width: 133px;
  padding-left: 15px;
  color: #fff;
  border-bottom-color: #fff;
}
.tab.scalars {
  width: 106px;
}
.inactive {
  width: 163px;
  height: 30px;
  display: flex;
  align-items: center;
  justify-content: space-between;
  border-bottom: 1px solid #fff;
  font-size: 17.5px;
  font-weight: 500;
  padding: 0 5px 2px 0;
}
.caret {
  border: 6px solid transparent;
  border-top-color: #c4c4c4;
  border-bottom: 0;
}
.caret.white {
  border-top-color: #fff;
}
.upload {
  width: 143px;
  height: 44px;
  margin: 0 0 4px 20px;
  border: 1px solid #fce0c8;
  border-radius: 5px;
  display: flex;
  align-items: center;
  padding-left: 18px;
  gap: 7px;
  font-size: 17.5px;
  font-weight: 500;
}
.actions {
  display: flex;
  gap: 20px;
  margin-left: 20px;
  padding-top: 2px;
}
.actions svg {
  width: 30px;
  height: 30px;
  fill: #fff;
}

/* Body */
.body {
  height: 821px;
  flex: none;
  display: flex;
  background: #303030;
}
.runs {
  width: 388px;
  flex: none;
  border-right: 4px solid #555;
}
.filter {
  height: 61px;
  padding: 0 0 0 26px;
  display: flex;
  align-items: center;
  gap: 7px;
  font-size: 16.25px;
  color: #797979;
}
.filter svg {
  fill: #c4c4c4;
}
.runs .filter,
.toolbar {
  border-bottom: 1px solid #555;
  background: linear-gradient(#444, #303030 8px);
}
.run {
  height: 53px;
  border-bottom: 1px solid #555;
  display: flex;
  align-items: center;
  padding-left: 30px;
  font-size: 16.25px;
  font-weight: 500;
}
.run.head {
  height: 64px;
}
.name {
  width: 246px;
  margin-left: 17px;
}
.run.head .name {
  font-weight: 400;
  -webkit-text-stroke: 0.3px #fff;
}
.palette {
  margin-top: 2px;
}
.swatch {
  width: 25px;
  height: 25px;
  margin: 0 0 1px 4px;
  border-radius: 50%;
  background: #8e98a3;
  border: 1px solid #e0e0e0;
}
.check {
  width: 20px;
  height: 20px;
  flex: none;
  border-radius: 2px;
  border: 2px solid #c4c4c4;
}
.check.on {
  border: 0;
  background: #ef6c00;
}
.check svg {
  width: 20px;
  height: 20px;
  fill: none;
  stroke: #303030;
  stroke-width: 2.1px;
}

.content {
  width: 1532px;
  display: flex;
  flex-direction: column;
}
.toolbar {
  height: 61px;
  flex: none;
  display: flex;
  align-items: center;
}
.filter.tags {
  width: 1022px;
  padding-left: 20px;
  gap: 6px;
}
.segments {
  display: flex;
  height: 34px;
  margin-bottom: 1px;
  border: 1px solid #555;
  border-radius: 5px;
  overflow: hidden;
  font-size: 16px;
}
.segment {
  display: flex;
  align-items: center;
  justify-content: center;
  padding-bottom: 2px;
  border-left: 1px solid #555;
  -webkit-text-stroke: 0.2px #fff;
}
.segment:first-child {
  border-left: 0;
}
.segment.active {
  background: #212121;
}
.separator {
  width: 1px;
  height: 44px;
  margin-left: 26px;
  background: #555;
}
.settings-btn {
  width: 139px;
  height: 44px;
  margin-left: 20px;
  border: 1px solid #e4e4e4;
  border-radius: 5px;
  background: #212121;
  color: #bdbdbd;
  display: flex;
  align-items: center;
  padding-left: 19px;
  gap: 4px;
  font-size: 17.5px;
  font-weight: 500;
}
.settings-btn svg {
  fill: #bdbdbd;
}
.panes {
  height: 760px;
  display: flex;
}
.cards-pane {
  width: 1198px;
  overflow: hidden;
  background: #3a3a3a;
}
.pinned {
  height: 54px;
  background: #303030;
  border-bottom: 1px solid #555;
  display: flex;
  align-items: center;
  padding-left: 18px;
  gap: 4px;
  font-size: 17.5px;
  font-weight: 500;
}
.hint {
  height: 58px;
  background: linear-gradient(#4a4a4a, #3a3a3a 8px);
  border-bottom: 1px solid #555;
  display: flex;
  align-items: center;
  justify-content: center;
  padding: 0 1px 2px 0;
  font-size: 16.25px;
  font-style: italic;
  color: #c4c4c4;
  -webkit-text-stroke: 0.3px #c4c4c4;
}
.group {
  height: 53px;
  background: #303030;
  border-bottom: 1px solid #555;
  display: flex;
  align-items: baseline;
  padding: 17px 27px 0 20px;
}
.group-name {
  width: 45px;
  font-size: 17.5px;
  font-weight: 500;
}
.group-count {
  flex: 1;
  font-size: 15px;
  font-weight: 500;
  color: #b0b0b0;
}
.group svg {
  align-self: flex-start;
  margin-top: 2px;
}
.grid {
  display: grid;
  grid-template-columns: 569px 569px;
  grid-auto-rows: 400px;
  gap: 20px;
  padding: 19px 20px 0;
  background: linear-gradient(#4a4a4a, #3a3a3a 8px);
}
.card {
  background: #303030;
  border: 1px solid #555;
  border-radius: 5px;
  padding: 10px 0 0 19px;
}
.card-head {
  height: 42px;
  display: flex;
  align-items: center;
}
.card-title {
  width: 343px;
  font-size: 17.5px;
  -webkit-text-stroke: 0.3px #fff;
  padding-left: 1px;
}
.tool {
  width: 50px;
  display: flex;
  justify-content: center;
  fill: #c4c4c4;
}
.tool:nth-child(3),
.tool:nth-child(4) {
  padding-right: 1px;
}
.tool.dim {
  fill: #7c7c7c;
}
.chart {
  margin-top: 8px;
}
.gridlines line {
  stroke: #c8c8c8;
  stroke-width: 1.4px;
}
.labels {
  font-size: 13.75px;
  font-weight: 500;
}

/* Scroll bars */
.scrollbar {
  width: 21px;
  flex: none;
  background: #f1f1f1;
  display: flex;
  flex-direction: column;
  align-items: flex-start;
  padding-left: 2px;
}
.scrollbar.right {
  width: 20px;
}
.up,
.down {
  border: 5px solid transparent;
  margin-left: 4px;
}
.up {
  margin-top: 9px;
  border-top: 0;
  border-bottom-color: #a3a3a3;
}
.down {
  margin-top: auto;
  margin-bottom: 8px;
  border-bottom: 0;
  border-top-color: #505050;
}
.thumb {
  width: 17px;
  margin-top: 7px;
  background: #c1c1c1;
}
.thumb.short {
  height: 338px;
}
.thumb.long {
  height: 561px;
}

/* Settings */
.settings {
  width: 293px;
  overflow: hidden;
  border-left: 1px solid #555;
  font-size: 16.25px;
}
.settings-title {
  height: 54px;
  border-bottom: 1px solid #555;
  display: flex;
  align-items: center;
  justify-content: space-between;
  padding: 0 30px 0 20px;
  font-size: 22.5px;
}
.settings-title span {
  padding-bottom: 2px;
  -webkit-text-stroke: 0.2px #fff;
}
.settings-title svg {
  margin-top: 2px;
}
.section {
  border-bottom: 1px solid #555;
  padding: 20px 20px 0;
}
.section h3 {
  margin: 0 0 14px;
  font-size: 16.25px;
  font-weight: 500;
  line-height: 20px;
  -webkit-text-stroke: 0.3px #fff;
}
.section label {
  display: block;
  line-height: 20px;
  color: #b0b0b0;
  -webkit-text-stroke: 0.2px #b0b0b0;
}
.general {
  height: 216px;
}
.scalar {
  height: 306px;
}
.histogram {
  height: 138px;
}
.select {
  height: 35px;
  margin-top: 8px;
  border: 1px solid #8e98a3;
  border-radius: 4px;
  display: flex;
  align-items: center;
  justify-content: space-between;
  padding: 0 13px 1px 7.5px;
  font-size: 16.25px;
  -webkit-text-stroke: 0.3px #fff;
}
.section .after-select {
  margin-top: 14px;
}
.slider-row {
  display: flex;
  align-items: center;
  margin: 11px 0 0 -8.5px;
}
.track {
  width: 185px;
  height: 2px;
  margin: 0 17px 1px 0;
  background: #707070;
}
.knob {
  width: 18px;
  height: 18px;
  border-radius: 50%;
  background: #ef6c00;
}
.knob.hollow {
  border: 2px solid #757575;
  background: none;
}
.smoothing {
  height: 35px;
  margin-top: 8px;
  display: flex;
  align-items: center;
}
.fill {
  width: 84px;
  height: 2px;
  margin-bottom: 1px;
  background: #ef6c00;
}
.rest {
  width: 51px;
  height: 2px;
  margin-bottom: 1px;
  background: #707070;
}
.number {
  width: 84px;
  height: 35px;
  margin-left: 15px;
  border: 1px solid #3e4b60;
  border-radius: 2px;
  display: flex;
  align-items: center;
  padding: 0 0 3px 5px;
  font-size: 17px;
  color: #b8b8b8;
}
.section .sorting {
  margin-top: 15px;
}
.option {
  display: flex;
  align-items: center;
  gap: 10px;
  margin-top: 20px;
  height: 20px;
  color: #b0b0b0;
  -webkit-text-stroke: 0.2px #b0b0b0;
}
.option.second {
  margin-top: 25px;
}
.option.second svg {
  margin-left: -4px;
}

/* Taskbar */
.taskbar {
  height: 50px;
  flex: none;
  background: #1c1c1c;
  display: flex;
  font-family: "Open Sans", "Noto Sans", sans-serif;
}
.start {
  width: 60px;
  display: flex;
  align-items: center;
  justify-content: center;
}
.search {
  width: 360px;
  background: #333;
  border: 1px solid #606060;
  border-right: 0;
  display: flex;
  align-items: center;
  padding-left: 14px;
  font-size: 18px;
  color: #e0e0e0;
  overflow: hidden;
}
.search .lens {
  margin-bottom: 2px;
}
.search span {
  width: 216px;
  margin-left: 13px;
}
.task {
  width: 62px;
  display: flex;
  align-items: center;
  justify-content: center;
  flex: none;
}
.view {
  width: 60px;
}
.edge {
  width: 68px;
}
.folder {
  width: 51px;
  margin: 0 5px 0 3px;
  padding-right: 1px;
}
.underlined,
.chrome {
  border-bottom: 3px solid #76b9ed;
  padding-top: 3px;
}
.chrome {
  width: 61px;
  background: #484848;
  margin-left: 1px;
  padding-left: 2px;
}
.cmd {
  width: 51px;
  margin-left: 6px;
  border-image: linear-gradient(90deg, #76b9ed 40px, #5585aa 40px) 3;
  border-width: 0 0 3px;
  border-style: solid;
  padding-right: 2px;
}
.tray {
  display: flex;
  align-items: center;
  margin-left: auto;
}
.tray-icon {
  width: 30px;
  display: flex;
  justify-content: center;
}
.tray-icon:nth-child(2) svg,
.tray-icon:nth-child(4) svg {
  margin-left: 2px;
}
.tray-icon:nth-child(3) svg {
  margin-left: 5px;
}
.tray-icon.last svg {
  margin-left: 2px;
}
.stack {
  display: flex;
  flex-direction: column;
  align-items: center;
  font-size: 14.5px;
  line-height: 23px;
}
.lang {
  width: 46px;
}
.clock {
  width: 91px;
}
.notice {
  margin: 0 25px 0 15px;
}
.peek {
  width: 1px;
  height: 50px;
  margin-right: 5px;
  background: #777;
}
</style>
